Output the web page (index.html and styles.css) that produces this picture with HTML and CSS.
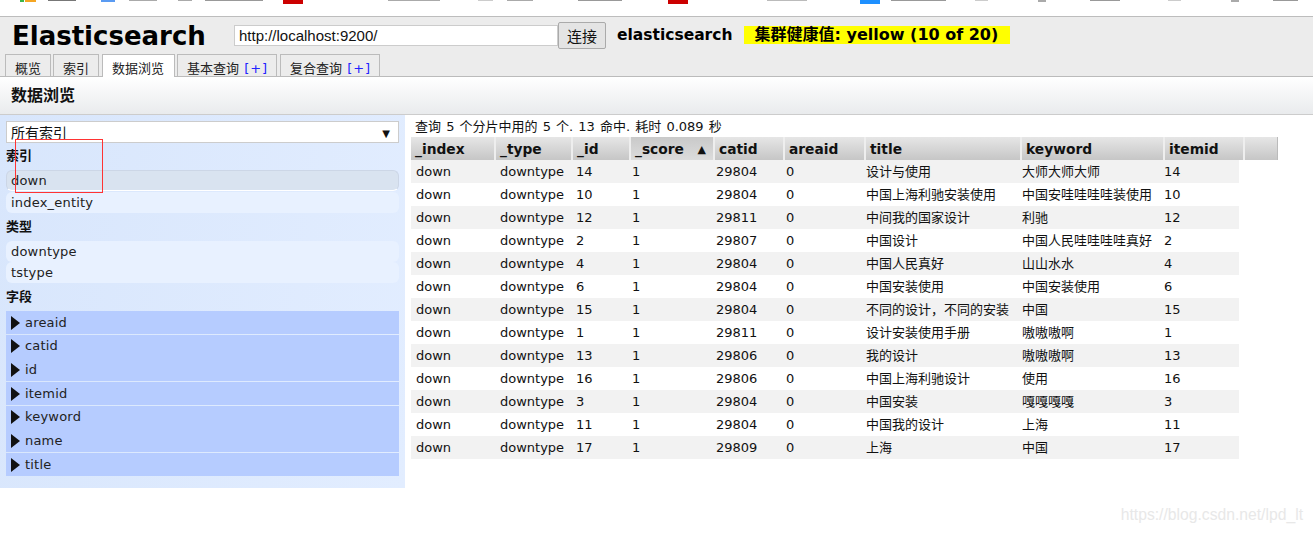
FILE: index.html
```html
<!DOCTYPE html>
<html lang="en">
<head>
<meta charset="UTF-8">
<meta name="viewport" content="width=device-width,initial-scale=1.0">
<title>Elasticsearch</title>
<link rel="stylesheet" href="styles.css">
</head>
<body>
<div class="bookmarks"></div>
<div class="header">
  <div class="top-row">
    <h1>Elasticsearch</h1>
    <input class="url" type="text" value="http://localhost:9200/">
    <button class="connect" type="button">连接</button>
    <span class="cluster">elasticsearch</span>
    <span class="health">集群健康值: yellow (10 of 20)</span>
  </div>
  <div class="tabs">
    <div class="tab t1">概览</div>
    <div class="tab t2">索引</div>
    <div class="tab t3 active">数据浏览</div>
    <div class="tab t4">基本查询 <span class="plus">[+]</span></div>
    <div class="tab t5">复合查询 <span class="plus">[+]</span></div>
  </div>
</div>
<div class="section-title">数据浏览</div>
<div class="main">
  <div class="side">
    <div class="select"><span>所有索引</span><span class="arrow">▼</span></div>
    <h3 class="first">索引</h3>
    <div class="item selected">down</div>
    <div class="item">index_entity</div>
    <h3>类型</h3>
    <div class="item">downtype</div>
    <div class="item">tstype</div>
    <h3>字段</h3>
    <div class="field"><i></i>areaid</div>
    <div class="field"><i></i>catid</div>
    <div class="field"><i></i>id</div>
    <div class="field"><i></i>itemid</div>
    <div class="field"><i></i>keyword</div>
    <div class="field"><i></i>name</div>
    <div class="field"><i></i>title</div>
  </div>
  <div class="results">
    <div class="summary">查询 5 个分片中用的 5 个. 13 命中. 耗时 0.089 秒</div>
    <div class="thead">
      <div class="th c-index">_index</div>
      <div class="th c-type">_type</div>
      <div class="th c-id">_id</div>
      <div class="th c-score sorted">_score<span class="sort">▲</span></div>
      <div class="th c-catid">catid</div>
      <div class="th c-areaid">areaid</div>
      <div class="th c-title">title</div>
      <div class="th c-keyword">keyword</div>
      <div class="th c-itemid">itemid</div>
      <div class="th c-blank"></div>
    </div>
    <table class="rows">
      <tr><td>down</td><td>downtype</td><td>14</td><td>1</td><td>29804</td><td>0</td><td>设计与使用</td><td>大师大师大师</td><td>14</td></tr>
      <tr><td>down</td><td>downtype</td><td>10</td><td>1</td><td>29804</td><td>0</td><td>中国上海利驰安装使用</td><td>中国安哇哇哇哇装使用</td><td>10</td></tr>
      <tr><td>down</td><td>downtype</td><td>12</td><td>1</td><td>29811</td><td>0</td><td>中间我的国家设计</td><td>利驰</td><td>12</td></tr>
      <tr><td>down</td><td>downtype</td><td>2</td><td>1</td><td>29807</td><td>0</td><td>中国设计</td><td>中国人民哇哇哇哇真好</td><td>2</td></tr>
      <tr><td>down</td><td>downtype</td><td>4</td><td>1</td><td>29804</td><td>0</td><td>中国人民真好</td><td>山山水水</td><td>4</td></tr>
      <tr><td>down</td><td>downtype</td><td>6</td><td>1</td><td>29804</td><td>0</td><td>中国安装使用</td><td>中国安装使用</td><td>6</td></tr>
      <tr><td>down</td><td>downtype</td><td>15</td><td>1</td><td>29804</td><td>0</td><td>不同的设计，不同的安装</td><td>中国</td><td>15</td></tr>
      <tr><td>down</td><td>downtype</td><td>1</td><td>1</td><td>29811</td><td>0</td><td>设计安装使用手册</td><td>嗷嗷嗷啊</td><td>1</td></tr>
      <tr><td>down</td><td>downtype</td><td>13</td><td>1</td><td>29806</td><td>0</td><td>我的设计</td><td>嗷嗷嗷啊</td><td>13</td></tr>
      <tr><td>down</td><td>downtype</td><td>16</td><td>1</td><td>29806</td><td>0</td><td>中国上海利驰设计</td><td>使用</td><td>16</td></tr>
      <tr><td>down</td><td>downtype</td><td>3</td><td>1</td><td>29804</td><td>0</td><td>中国安装</td><td>嘎嘎嘎嘎</td><td>3</td></tr>
      <tr><td>down</td><td>downtype</td><td>11</td><td>1</td><td>29804</td><td>0</td><td>中国我的设计</td><td>上海</td><td>11</td></tr>
      <tr><td>down</td><td>downtype</td><td>17</td><td>1</td><td>29809</td><td>0</td><td>上海</td><td>中国</td><td>17</td></tr>
    </table>
  </div>
</div>
<div class="mark-box"></div>
<div class="watermark">https://blog.csdn.net/lpd_lt</div>
</body>
</html>
```

FILE: styles.css
```css
html,body{margin:0;padding:0;height:533px;overflow:hidden}
body{font-family:"DejaVu Sans","Noto Sans CJK SC",sans-serif;font-size:13px;color:#111;background:#fff;position:relative}

/* bottom edge of the browser bookmark bar, favicons and labels cut off */
.bookmarks{height:16px;border-bottom:1px solid #bdbdbd;background-color:#fff;background-repeat:no-repeat;background-image:
  linear-gradient(#3bb54a,#3bb54a),linear-gradient(#f5a623,#f5a623),linear-gradient(#777,#777),linear-gradient(#5a9bf2,#5a9bf2),
  linear-gradient(#aaa,#aaa),linear-gradient(#aaa,#aaa),linear-gradient(#999,#999),linear-gradient(#c00,#c00),linear-gradient(#aaa,#aaa),
  linear-gradient(#ccc,#ccc),linear-gradient(#aaa,#aaa),linear-gradient(#999,#999),linear-gradient(#c00,#c00),linear-gradient(#bbb,#bbb),
  linear-gradient(#1e90ff,#1e90ff),linear-gradient(#999,#999),linear-gradient(#ccc,#ccc),linear-gradient(#aaa,#aaa),linear-gradient(#999,#999),
  linear-gradient(#ccc,#ccc),linear-gradient(#aaa,#aaa),linear-gradient(#999,#999);
  background-size:4px 2px,11px 2px,28px 1px,14px 2px,28px 1px,14px 1px,58px 1px,20px 4px,52px 1px,
  15px 1px,26px 1px,44px 1px,20px 4px,40px 1px,
  20px 4px,55px 1px,13px 1px,8px 2px,30px 1px,
  13px 1px,8px 2px,25px 1px;
  background-position:20px 0,25px 0,48px 0,101px 0,129px 0,178px 0,205px 0,283px 0,388px 0,
  478px 0,507px 0,578px 0,668px 0,767px 0,
  860px 0,891px 0,975px 0,1038px 0,1090px 0,
  1168px 0,1231px 0,1273px 0}

.header{height:59px;background:#ececec;border-bottom:1px solid #bbb;padding-left:5px}
.top-row{height:37px;display:flex;align-items:flex-start}
h1{margin:3px 0 0 7px;width:222px;font-size:26px;line-height:32px;font-weight:bold;color:#000;white-space:nowrap}
.url{box-sizing:border-box;width:324px;height:21px;margin:8px 0 0;padding:0 4px;border:1px solid #ccc;background:#fff;font:15px "Liberation Sans",sans-serif;color:#111}
.connect{box-sizing:border-box;width:48px;height:27px;margin:5px 0 0;padding:0;border:1px solid #aaa;border-radius:2px;background:#e4e4e4;font:15px "Noto Sans CJK SC",sans-serif;color:#111}
.cluster{margin:8px 0 0 11px;font-size:15.5px;line-height:20px;font-weight:bold;color:#000}
.health{box-sizing:border-box;margin:9px 0 0 11px;height:18px;line-height:18px;width:266px;background:#ff0;padding-left:11px;font-size:16px;font-weight:bold;color:#000;white-space:nowrap}

.tabs{display:flex;height:22px;gap:2px}
.tab{box-sizing:border-box;height:22px;padding:4px 0 0 9px;border:1px solid #bbb;border-bottom:0;background:#ececec;font-size:13px;line-height:19px;white-space:nowrap;color:#222}
.tab.active{background:#fff;height:23px;position:relative;z-index:1}
.t1,.t2{width:46px}
.t3{width:73px;margin-left:1px}
.t4,.t5{width:100px}
.t5{margin-left:1px}
.plus{color:#22f;letter-spacing:1px;margin-left:1px}

.section-title{box-sizing:border-box;height:38px;padding-left:11px;border-bottom:1px solid #ccc;background:linear-gradient(#fff,#e9ebed);font-size:16px;line-height:37px;font-weight:bold;color:#111}
.main{display:flex;align-items:flex-start}

.side{box-sizing:border-box;width:405px;height:373px;padding:6px 6px 0;background:linear-gradient(100deg,#d8e6fc,#e2edff)}
.select{box-sizing:border-box;height:22px;border:1px solid #ccc;background:#fff;display:flex;justify-content:space-between;padding:0 8px 0 4px;font-size:14px;line-height:23px;overflow:hidden}
.arrow{font-size:10px}
h3{margin:4px 0 5px;font-size:13px;line-height:19px;font-weight:bold;color:#111}
h3.first{margin-top:3px}
.item{box-sizing:border-box;height:21px;padding-left:5px;border-radius:6px;background:#e8f1ff;line-height:21px;letter-spacing:.2px;color:#222}
.item.selected{background:#d9e3f0;border:1px solid #ccd6e6;border-bottom-color:#fff;padding-left:4px;line-height:19px;margin-bottom:1px}
.field{box-sizing:border-box;height:23px;margin-bottom:.7px;padding-left:5px;background:#b6ccff;display:flex;align-items:center;line-height:22px;letter-spacing:.2px;color:#222}
.field i{width:0;height:0;margin-right:5px;border-left:9px solid #111;border-top:7px solid transparent;border-bottom:7px solid transparent}

.results{margin-left:6px;flex:1}
.summary{height:22px;padding-left:4px;font-size:13px;line-height:24px;word-spacing:1px;color:#111;white-space:nowrap}
.thead{display:flex;height:23px}
.th{box-sizing:border-box;height:23px;padding-left:4px;border-right:2px solid #eee;background:linear-gradient(#e6e6e6,#c6c6c6);font-size:13.8px;line-height:25px;font-weight:bold;color:#111;white-space:nowrap}
.th.sorted{background:linear-gradient(#c9c9c9,#dcdcdc);display:flex;justify-content:space-between;padding-right:7px}
.sort{font-size:11px}
.c-index{width:85px}
.c-type{width:77px}
.c-id{width:58px}
.c-score{width:84px}
.c-catid{width:70px}
.c-areaid{width:81px}
.c-title{width:156px}
.c-keyword{width:143px}
.c-itemid{width:80px}
.c-blank{width:33px;border-right:1px solid #bbb}

.rows{width:828px;table-layout:fixed;border-collapse:collapse}
.rows td{height:23px;padding:0 0 0 5px;line-height:23px;color:#111;white-space:nowrap;overflow:hidden}
.rows tr:nth-child(odd){background:#f2f2f2}
.rows td:nth-child(1){width:79px}
.rows td:nth-child(2){width:71px}
.rows td:nth-child(3){width:51px}
.rows td:nth-child(4){width:79px}
.rows td:nth-child(5){width:65px}
.rows td:nth-child(6){width:75px}
.rows td:nth-child(7){width:151px}
.rows td:nth-child(8){width:137px}

.mark-box{position:absolute;left:15px;top:139px;width:86px;height:52px;border:1px solid #f33}
.watermark{position:absolute;right:10px;top:506px;font:15.7px "Liberation Sans",sans-serif;color:#e8e8e8}
```
